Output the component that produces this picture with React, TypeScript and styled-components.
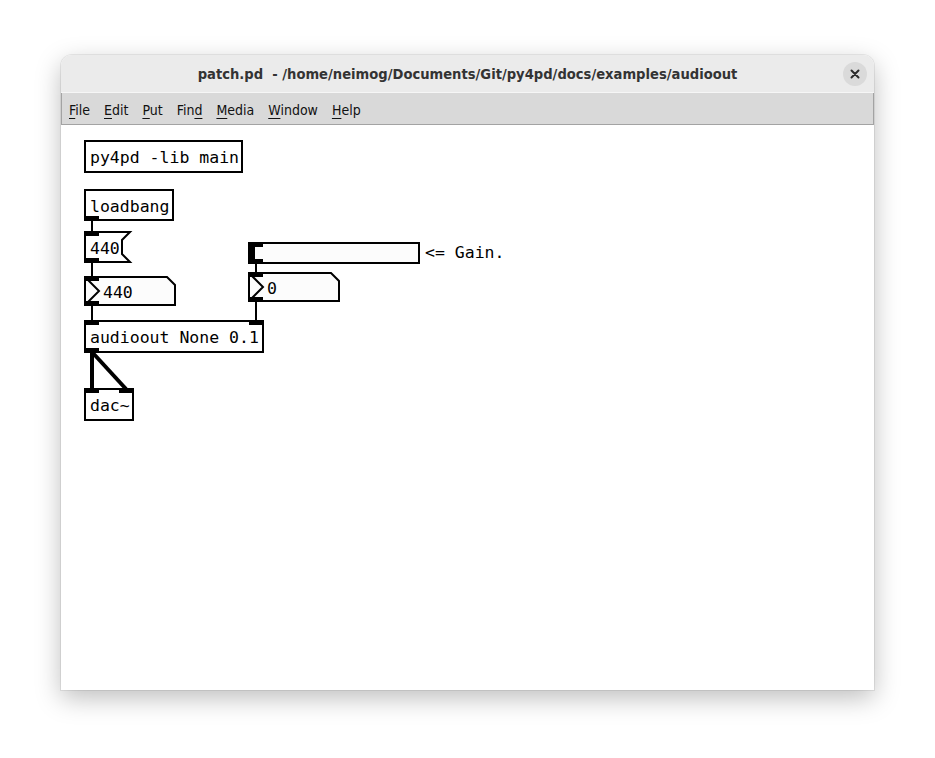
import React from 'react';
import styled, { createGlobalStyle } from 'styled-components';

const GlobalStyle = createGlobalStyle`
  html, body { margin: 0; padding: 0; background: #ffffff; }
  body { width: 935px; height: 758px; overflow: hidden; }
`;

const Desktop = styled.div`
  width: 935px;
  height: 758px;
  box-sizing: border-box;
  padding: 55px 61px 68px 61px;
  background: #ffffff;
  display: flex;
`;

const Window = styled.div`
  flex: 1;
  display: flex;
  flex-direction: column;
  border-radius: 11px 11px 0 0;
  overflow: hidden;
  background: #ffffff;
  box-shadow: 0 8px 26px rgba(0, 0, 0, 0.26), 0 0 0 1px rgba(0, 0, 0, 0.07);
`;

const TitleBar = styled.div`
  height: 37px;
  flex: none;
  background: #ebebeb;
  display: grid;
  grid-template-columns: 1fr auto 1fr;
  align-items: center;
  border-bottom: 1px solid #f6f6f6;
`;

const Title = styled.div`
  grid-column: 2;
  font-family: "DejaVu Sans Condensed", "DejaVu Sans", sans-serif;
  font-stretch: condensed;
  font-weight: bold;
  font-size: 14.6px;
  color: #333333;
  white-space: pre;
`;

const CloseButton = styled.div`
  grid-column: 3;
  justify-self: end;
  margin-right: 7px;
  width: 24px;
  height: 24px;
  border-radius: 50%;
  background: #dadada;
  display: flex;
  align-items: center;
  justify-content: center;
`;

const MenuBar = styled.div`
  height: 32px;
  flex: none;
  box-sizing: border-box;
  padding-top: 2px;
  background: #d9d9d9;
  border: 1px solid #a3a3a3;
  border-top: none;
  display: flex;
  align-items: center;
  gap: 14px;
  padding-left: 7px;
  font-family: "DejaVu Sans Condensed", "DejaVu Sans", sans-serif;
  font-stretch: condensed;
  font-size: 14px;
  color: #111;
`;

const MenuItem = styled.span`
  white-space: pre;
  u { text-decoration: underline; text-underline-offset: 3px; }
`;

const Canvas = styled.div`
  position: relative;
  flex: 1;
  background: #ffffff;
  font-family: "DejaVu Sans Mono", monospace;
  font-size: 16.5px;
  color: #000;
`;

type Pos = { $x: number; $y: number; $w: number; $h: number };

const Node = styled.div<Pos>`
  position: absolute;
  left: ${(p) => p.$x}px;
  top: ${(p) => p.$y}px;
  width: ${(p) => p.$w}px;
  height: ${(p) => p.$h}px;
  box-sizing: border-box;
  display: flex;
  align-items: center;
  padding-top: 2px;
  white-space: pre;
`;

const ObjectBox = styled(Node)`
  border: 2px solid #000;
  background: #fff;
  padding-left: 4px;
`;

const ShapeBox = styled(Node)<{ $pad: number }>`
  padding-left: ${(p) => p.$pad}px;
`;

const Outline = styled.svg`
  position: absolute;
  inset: 0;
  width: 100%;
  height: 100%;
  overflow: visible;
`;

const Label = styled.span`
  position: relative;
`;

const Iolet = styled.span<{ $in?: boolean; $right?: boolean; $o?: number }>`
  position: absolute;
  width: 15px;
  height: 5px;
  background: #000;
  ${(p) => (p.$in ? `top: ${p.$o ?? -2}px;` : `bottom: ${p.$o ?? -2}px;`)}
  ${(p) => (p.$right ? `right: ${p.$o ?? -2}px;` : `left: ${p.$o ?? -2}px;`)}
`;

const Slider = styled(Node)`
  border: 2px solid #000;
  background: #fcfcfc;
`;

const Knob = styled.span`
  position: absolute;
  left: 0;
  top: 0;
  bottom: 0;
  width: 5px;
  background: #000;
`;

const Comment = styled(Node)``;

const Wires = styled.svg`
  position: absolute;
  left: 0;
  top: 0;
  width: 100%;
  height: 100%;
  pointer-events: none;
`;

function MessageBox({ x, y, w, h, text }: { x: number; y: number; w: number; h: number; text: string }) {
  const c = 8;
  const pts = `1,1 ${w - 1},1 ${w - 1 - c},${1 + c} ${w - 1 - c},${h - 1 - c} ${w - 1},${h - 1} 1,${h - 1}`;
  return (
    <ShapeBox $x={x} $y={y} $w={w} $h={h} $pad={6}>
      <Outline viewBox={`0 0 ${w} ${h}`}>
        <polygon points={pts} fill="#fff" stroke="#000" strokeWidth={2} />
      </Outline>
      <Label>{text}</Label>
      <Iolet $in $o={0} />
      <Iolet $o={0} />
    </ShapeBox>
  );
}

function NumberBox({ x, y, w, h, text }: { x: number; y: number; w: number; h: number; text: string }) {
  const c = 8;
  const pts = `1,1 ${w - 1 - c},1 ${w - 1},${1 + c} ${w - 1},${h - 1} 1,${h - 1}`;
  return (
    <ShapeBox $x={x} $y={y} $w={w} $h={h} $pad={19}>
      <Outline viewBox={`0 0 ${w} ${h}`}>
        <polygon points={pts} fill="#fcfcfc" stroke="#000" strokeWidth={2} />
        <polyline points={`1,1 ${15},${h / 2} 1,${h - 1}`} fill="none" stroke="#000" strokeWidth={2} />
      </Outline>
      <Label>{text}</Label>
      <Iolet $in $o={0} />
      <Iolet $o={0} />
    </ShapeBox>
  );
}

const CloseIcon = () => (
  <svg width="10" height="10" viewBox="0 0 10 10">
    <path d="M1.5 1.5 L8.5 8.5 M8.5 1.5 L1.5 8.5" stroke="#2a2a2a" strokeWidth="2" strokeLinecap="round" />
  </svg>
);

export default function App() {
  return (
    <>
      <GlobalStyle />
      <Desktop>
        <Window>
          <TitleBar>
            <Title>patch.pd  - /home/neimog/Documents/Git/py4pd/docs/examples/audioout</Title>
            <CloseButton>
              <CloseIcon />
            </CloseButton>
          </TitleBar>
          <MenuBar>
            <MenuItem><u>F</u>ile</MenuItem>
            <MenuItem><u>E</u>dit</MenuItem>
            <MenuItem><u>P</u>ut</MenuItem>
            <MenuItem>Fin<u>d</u></MenuItem>
            <MenuItem><u>M</u>edia</MenuItem>
            <MenuItem><u>W</u>indow</MenuItem>
            <MenuItem><u>H</u>elp</MenuItem>
          </MenuBar>
          <Canvas>
            <Wires>
              <g stroke="#000" strokeWidth={2}>
                <line x1={31} y1={95} x2={31} y2={107} />
                <line x1={31} y1={137} x2={31} y2={152} />
                <line x1={31} y1={180} x2={31} y2={196} />
                <line x1={195} y1={137} x2={195} y2={148} />
                <line x1={195} y1={175} x2={195} y2={197} />
              </g>
              <g stroke="#000" strokeWidth={4}>
                <line x1={31} y1={226} x2={31} y2={265} />
                <line x1={31} y1={227} x2={65} y2={264} />
              </g>
            </Wires>

            <ObjectBox $x={23} $y={15} $w={159} $h={33}>py4pd -lib main</ObjectBox>

            <ObjectBox $x={23} $y={64} $w={90} $h={32}>
              loadbang
              <Iolet />
            </ObjectBox>

            <MessageBox x={23} y={106} w={47} h={32} text="440" />

            <NumberBox x={23} y={151} w={92} h={30} text="440" />

            <ObjectBox $x={23} $y={195} $w={180} $h={33}>
              audioout None 0.1
              <Iolet $in />
              <Iolet $in $right />
              <Iolet />
            </ObjectBox>

            <ObjectBox $x={23} $y={263} $w={50} $h={33}>
              dac~
              <Iolet $in />
              <Iolet $in $right />
            </ObjectBox>

            <Slider $x={187} $y={117} $w={172} $h={22}>
              <Knob />
              <Iolet $in />
              <Iolet />
            </Slider>

            <Comment $x={364} $y={115} $w={100} $h={22}>{'<= Gain.'}</Comment>

            <NumberBox x={187} y={147} w={92} h={30} text="0" />
          </Canvas>
        </Window>
      </Desktop>
    </>
  );
}
